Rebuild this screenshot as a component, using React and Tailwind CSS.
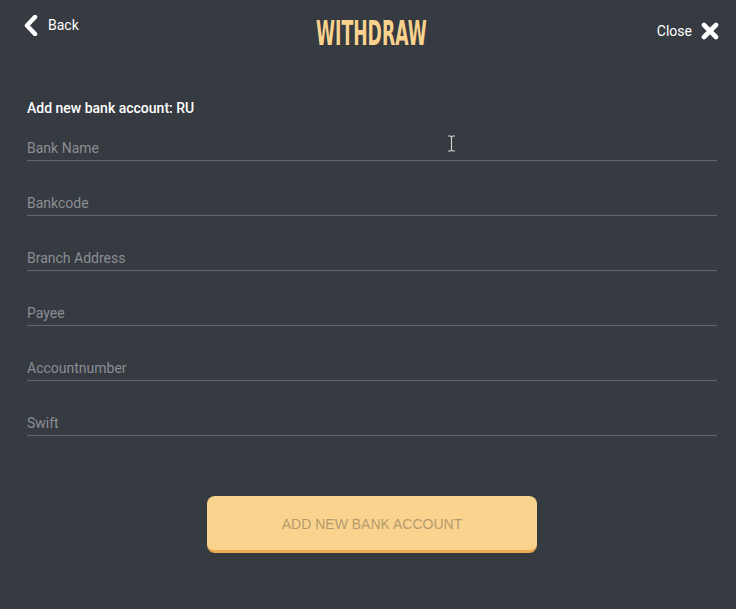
import { useState } from "react";

const fields = ["Bank Name", "Bankcode", "Branch Address", "Payee", "Accountnumber", "Swift"];

export default function App() {
  const [values, setValues] = useState({});

  return (
    <div className="relative w-[736px] h-[609px] bg-[#363a41] font-['Roboto','Liberation_Sans',sans-serif] text-white overflow-hidden">
      {/* Header */}
      <header className="grid grid-cols-3 items-start pl-[24px] pr-[17px] pt-[15px] h-[92px]">
        <button className="flex items-center gap-[10px] text-[14px] text-white justify-self-start">
          <svg width="14" height="21" viewBox="0 0 14 21">
            <path d="M11 2 L3 10.5 L11 19" fill="none" stroke="#fff" strokeWidth="4.5" strokeLinecap="round" strokeLinejoin="round" />
          </svg>
          <span className="-mt-[1px]">Back</span>
        </button>
        <h1 className="justify-self-center text-[33px] leading-[34px] font-bold text-[#f9d38e] font-['DejaVu_Sans_Condensed','Roboto',sans-serif] scale-x-[0.58] mt-[2px] whitespace-nowrap">
          WITHDRAW
        </h1>
        <button className="flex items-center gap-[9px] text-[14px] text-white mt-[6px] justify-self-end">
          <span>Close</span>
          <svg width="18" height="18" viewBox="0 0 18 18" className="-mt-[1px]">
            <path d="M3 3 L15 15 M15 3 L3 15" stroke="#fff" strokeWidth="4.6" strokeLinecap="round" />
          </svg>
        </button>
      </header>

      {/* Form */}
      <div className="px-[27px] pr-[19px]">
        <p className="text-[14px] font-medium leading-[16px] mt-[8px]">Add new bank account: RU</p>
        <div className="flex flex-col gap-[20px] mt-[10px]">
          {fields.map((f) => (
            <input
              key={f}
              placeholder={f}
              value={values[f] || ""}
              onChange={(e) => setValues({ ...values, [f]: e.target.value })}
              className="w-full h-[35px] bg-transparent border-b border-[#62666a] text-[14px] text-white placeholder:text-[#8b8e92] outline-none pt-[9px]"
            />
          ))}
        </div>
        <div className="flex justify-center mt-[60px]">
          <button className="w-[330px] h-[57px] rounded-[8px] bg-[#fad48f] border-b-[3px] border-[#e9ac4e] text-[14px] uppercase text-[#b59a6c] pt-[2px] font-['Liberation_Sans',sans-serif]">
            Add new bank account
          </button>
        </div>
      </div>

      {/* mouse cursor */}
      <svg className="absolute left-[447px] top-[135px]" width="9" height="17" viewBox="0 0 9 17">
        <path d="M1 1 H3.5 L4.5 2 L5.5 1 H8 M4.5 2 V15 M1 16 H3.5 L4.5 15 L5.5 16 H8" fill="none" stroke="#d0d0d0" strokeWidth="1.2" />
      </svg>
    </div>
  );
}
